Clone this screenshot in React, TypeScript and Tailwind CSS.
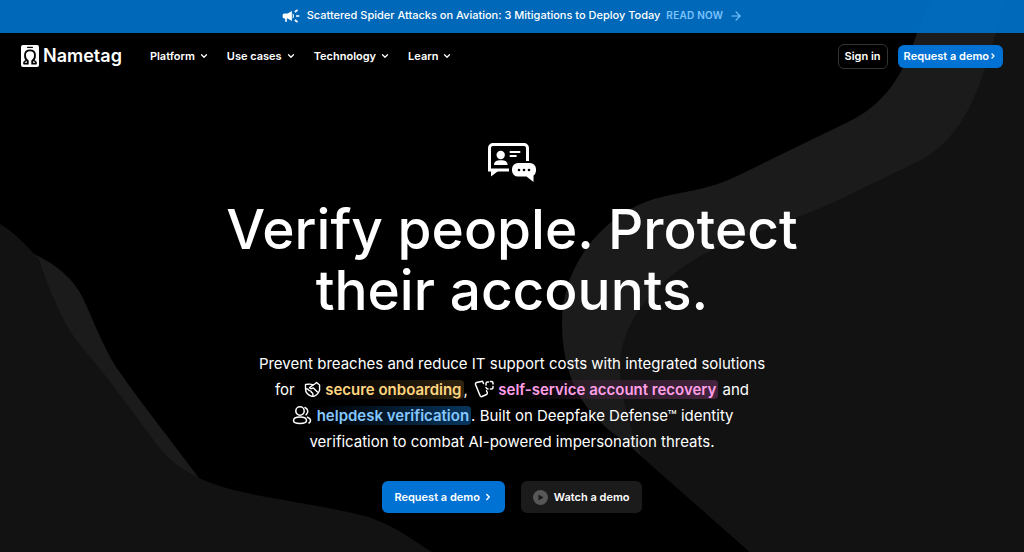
import type { ReactNode } from "react";
import { ArrowRight, ChevronDown, ChevronRight } from "lucide-react";
import { MdCampaign } from "react-icons/md";

const navItems = ["Platform", "Use cases", "Technology", "Learn"];

function Backdrop() {
  return (
    <svg
      className="absolute inset-0 w-full h-full"
      viewBox="0 0 1024 552"
      preserveAspectRatio="xMidYMid slice"
      aria-hidden="true"
    >
      <path
        fill="#1b1b1b"
        d="M932 0C924 14 921 24 916 36C902 80 880 107 848 122L735 177C709 190 683 191 654 199C600 216 562 268 562 322C562 378 583 414 624 441L750 552H1024V0Z"
      />
      <path
        fill="#121212"
        d="M1004 0C998 20 997 34 990 52C974 110 952 146 915 163L855 192C810 215 765 228 728 243C665 268 620 318 620 366C620 400 632 432 642 457L750 552H1024V0Z"
      />
      <path
        fill="#1b1b1b"
        d="M30 252C56 264 73 278 83 298C93 320 103 346 116 367C142 404 172 442 199 478L150 470L30 300Z"
      />
      <path
        fill="#121212"
        d="M0 224C14 232 28 247 39 259C46 282 56 306 70 331C80 346 94 361 108 379L158 446C172 464 186 471 199 478C240 497 300 500 365 516C395 525 412 540 432 552H0Z"
      />
    </svg>
  );
}

function LogoMark() {
  return (
    <svg className="w-[18px] h-[22px]" viewBox="0 0 18 22" fill="none" aria-hidden="true">
      <rect width="18" height="22" rx="2" fill="#fff" />
      <rect x="6" y="1.8" width="6" height="1.3" rx="0.6" fill="#000" />
      <path
        d="M2.5 18.6H6.8V16.1C5 14.9 4 12.7 4 10.4C4 7.3 6.1 5.4 9 5.4S14 7.3 14 10.4C14 12.7 13 14.9 11.2 16.1V18.6H15.5"
        stroke="#000"
        strokeWidth="1.8"
      />
      <path d="M2.6 18.6C2.8 16.8 4 15.8 5.8 15.4M15.4 18.6C15.2 16.8 14 15.8 12.2 15.4" stroke="#000" strokeWidth="1.2" />
    </svg>
  );
}

function HeroIcon() {
  return (
    <svg className="w-12 h-10" viewBox="0 0 48 40" fill="none" aria-hidden="true">
      <path d="M39.5 18V5a3.5 3.5 0 0 0-3.5-3.5H5A3.5 3.5 0 0 0 1.5 5V27H21" stroke="#fff" strokeWidth="3" />
      <path d="M3 27H11.5L3 33.5Z" fill="#fff" />
      <circle cx="12.7" cy="12" r="4.2" fill="#fff" />
      <path d="M6 22C6 18.6 8.5 17.2 12.8 17.2S19.6 18.6 19.6 22Z" fill="#fff" />
      <path d="M21.7 9H32.3M21.7 12.9H28.6" stroke="#fff" strokeWidth="2" />
      <path
        d="M30 20H42A6 6 0 0 1 48 26V28A6 6 0 0 1 45.5 32.5V39L38.5 33.5H30A6 6 0 0 1 24 28V26A6 6 0 0 1 30 20Z"
        fill="#fff"
      />
      <circle cx="31" cy="27" r="1.3" fill="#000" />
      <circle cx="36" cy="27" r="1.3" fill="#000" />
      <circle cx="41" cy="27" r="1.3" fill="#000" />
    </svg>
  );
}

function InlineIcon({ children }: { children: ReactNode }) {
  return (
    <svg
      className="ml-[2px] inline-block w-5 h-5 align-[-4px]"
      viewBox="0 0 20 20"
      fill="none"
      stroke="#fff"
      strokeWidth="1.5"
      strokeLinecap="round"
      strokeLinejoin="round"
      aria-hidden="true"
    >
      {children}
    </svg>
  );
}

function HandshakeIcon() {
  return (
    <InlineIcon>
      <g transform="translate(2.2 1) scale(0.92)">
        <path d="M2.5 4.8C5 4.8 7 4 9 4.8L11 5.2C12.5 4.5 13.5 3.5 14.5 2.8L17.8 5.5V11C17 14 14.5 16.5 11.5 17.8H9.5C5.500 16.500 2.500 14 2.500 9.500Z" />
        <path d="M11 5.200L7 8.300C7.800 9.800 9.300 9.600 11 8.600L15.500 13" />
        <path d="M2.800 9.500C5 9.500 6 10.500 6.500 11.500C8 11.500 9 12.500 9 13.500C10.200 13.700 10.800 15 10.500 17" />
      </g>
    </InlineIcon>
  );
}

function PhoneRecoveryIcon() {
  return (
    <InlineIcon>
      <path d="M9.5 4.5L8.5 2.3L2.5 3.5C1.5 4 1.2 4.5 1.5 5.5L6 16.5C6.5 17.5 7 18 8 17.5L12.5 15.5C13.5 15 13.5 14.5 13.3 13.5L12.5 11.8" />
      <path d="M12 6V4.5C12 3.5 12.5 3 13.5 3H14.5M16.5 2.5H17.5C18.5 2.5 19 3 19 4V5M19 7.5V8.5C19 9.5 18.5 10 17.5 10H16.5M12 8.5C12.5 9.8 13 10 14 10" />
    </InlineIcon>
  );
}

function PeopleIcon() {
  return (
    <InlineIcon>
      <circle cx="8" cy="6" r="4.2" />
      <path d="M1.5 15.5C1.5 13 3.5 12 8 12S14.5 13 14.5 15.5S12 18.5 8 18.5S1.5 18 1.5 15.5Z" />
      <path d="M13 2.5C16.5 4 16.5 8 14 9.8M15.5 12.2C19 13.5 19.5 16.5 17 18" />
    </InlineIcon>
  );
}

function PlayIcon() {
  return (
    <svg className="w-[15px] h-[15px]" viewBox="0 0 15 15" aria-hidden="true">
      <circle cx="7.5" cy="7.5" r="7.5" fill="#575757" />
      <path d="M5.5 4.5L10.5 7.5L5.5 10.5Z" fill="#1b1b1b" />
    </svg>
  );
}

function Announcement() {
  return (
    <div className="relative flex h-[33px] items-center justify-center bg-[#0073cc]/90 pb-[2px]">
      <a href="#" className="flex items-center text-[11px] font-medium">
        <MdCampaign className="mr-[6px] w-5 h-5" />
        <span className="mr-[6px]">Scattered Spider Attacks on Aviation: 3 Mitigations to Deploy Today</span>
        <span className="flex items-center gap-[6px] text-[10px] font-semibold tracking-wide text-[#7cc4ff]">
          READ NOW
          <ArrowRight className="w-[14px] h-[14px]" strokeWidth={2} />
        </span>
      </a>
    </div>
  );
}

function Header() {
  return (
    <header className="relative flex h-[46px] items-center px-[21px] text-[11px] font-semibold">
      <a href="#" className="mr-7 flex items-center gap-1">
        <LogoMark />
        <span className="text-[18px] leading-6">Nametag</span>
      </a>
      <nav className="flex items-center gap-[18px]">
        {navItems.map((item) => (
          <button key={item} className="flex items-center gap-1">
            {item}
            <ChevronDown className="w-[10px] h-[10px]" strokeWidth={3} />
          </button>
        ))}
      </nav>
      <div className="ml-auto flex items-center gap-[10px]">
        <a href="#" className="flex h-[25px] items-center rounded-md border border-[#333] px-[6px]">
          Sign in
        </a>
        <a href="#" className="flex h-[23px] items-center rounded-md bg-[#0072d3] px-[6px]">
          Request a demo
          <ChevronRight className="w-2 h-2" strokeWidth={4} />
        </a>
      </div>
    </header>
  );
}

function Hero() {
  return (
    <main className="relative flex flex-col items-center px-6 pt-16 pb-9 text-center">
      <HeroIcon />
      <h1 className="mt-4 text-[55px] font-medium leading-[61px]">
        Verify people. Protect
        <br />
        their accounts.
      </h1>
      <p className="mt-[30px] text-[15px] leading-[26px]">
        Prevent breaches and reduce IT support costs with integrated solutions
        <br className="hidden sm:block" />
        for <HandshakeIcon />{" "}
        <a href="#" className="rounded bg-gradient-to-r from-transparent to-[#30240f] pr-[2px] font-semibold text-[#ffd580]">
          secure onboarding
        </a>
        , <PhoneRecoveryIcon />{" "}
        <a href="#" className="rounded bg-gradient-to-r from-transparent to-[#45243f] pr-[2px] font-semibold text-[#ff9fe8]">
          self-service account recovery
        </a>{" "}
        and
        <br className="hidden sm:block" />
        <PeopleIcon />{" "}
        <a href="#" className="rounded bg-gradient-to-r from-transparent to-[#07365f] pr-[2px] font-semibold text-[#85c8ff]">
          helpdesk verification
        </a>
        . Built on Deepfake Defense™ identity
        <br className="hidden sm:block" />
        verification to combat AI-powered impersonation threats.
      </p>
      <div className="mt-[26px] flex gap-4 text-[11px] font-semibold">
        <a href="#" className="flex h-8 items-center gap-[3px] rounded-md bg-[#0072d3] px-3">
          Request a demo
          <ChevronRight className="w-[10px] h-[10px]" strokeWidth={3.5} />
        </a>
        <button className="flex h-8 items-center gap-[6px] rounded-md bg-[#1b1b1b] px-3">
          <PlayIcon />
          Watch a demo
        </button>
      </div>
    </main>
  );
}

export default function App() {
  return (
    <div className="relative min-h-screen overflow-hidden bg-black font-[Inter,sans-serif] text-white">
      <Backdrop />
      <Announcement />
      <Header />
      <Hero />
    </div>
  );
}
